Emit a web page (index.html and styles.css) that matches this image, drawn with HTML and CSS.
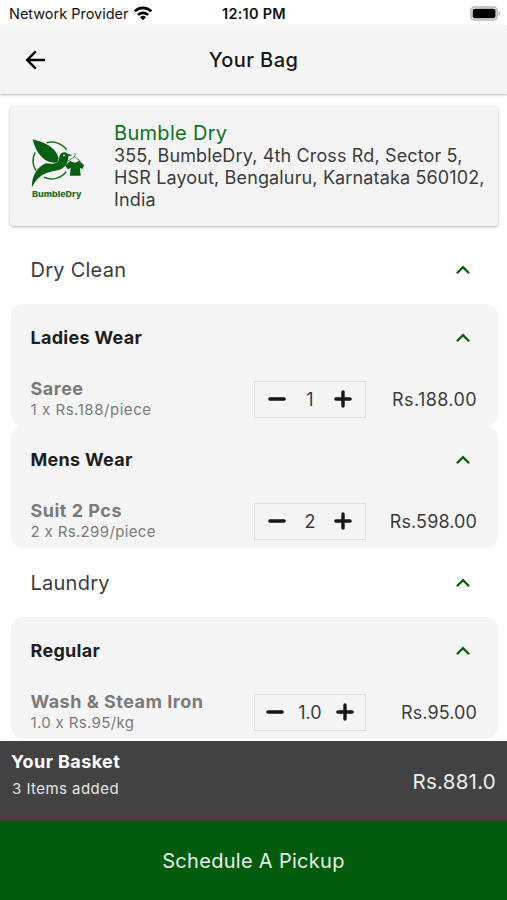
FILE: index.html
```html
<!DOCTYPE html>
<html lang="en">
<head>
<meta charset="utf-8">
<meta name="viewport" content="width=device-width, initial-scale=1">
<title>Your Bag</title>
<link rel="stylesheet" href="styles.css">
</head>
<body>
<svg class="defs" aria-hidden="true">
  <symbol id="chevron" viewBox="0 0 16 10"><path d="M1.9 8.2 8 2.1l6.1 6.1" fill="none" stroke="currentColor" stroke-width="2.3"/></symbol>
  <symbol id="minus" viewBox="0 0 18 18"><path d="M1.9 9h14.2" stroke="currentColor" stroke-width="3.4" stroke-linecap="round"/></symbol>
  <symbol id="plus" viewBox="0 0 18 18"><path d="M1.9 9h14.2M9 1.9v14.2" stroke="currentColor" stroke-width="3.4" stroke-linecap="round"/></symbol>
</svg>
<div class="app">
  <div class="status">
    <div class="carrier"><span>Network Provider</span>
      <svg class="wifi" viewBox="0 0 20 15"><g fill="none" stroke="#000" stroke-width="2.7"><path d="M1.7 5.4a11.7 11.7 0 0 1 16.6 0"/><path d="M4.9 8.9a7.2 7.2 0 0 1 10.2 0"/></g><path d="M7 11.3a4.3 4.3 0 0 1 6 0l-3 3z"/></svg>
    </div>
    <div class="clock">12:10 PM</div>
    <svg class="battery" viewBox="0 0 31 15"><rect x=".9" y=".9" width="26.2" height="13.2" rx="3.8" fill="#f4f4f4" stroke="#b5b5b5" stroke-width="1.5"/><rect x="2.7" y="2.7" width="22.8" height="9.6" rx="2" fill="#000"/><path d="M28.6 5c2.1.8 2.1 4.2 0 5z" fill="#b5b5b5"/></svg>
  </div>
  <header class="header">
    <svg class="back" viewBox="0 0 22 20"><path d="M20 10H2.5M10.8 1.4 2.2 10l8.6 8.6" fill="none" stroke="#000" stroke-width="2.4"/></svg>
    <h1>Your Bag</h1>
  </header>
  <main class="content">
    <section class="store">
      <svg class="logo" viewBox="0 0 75 75">
        <g fill="none" stroke="#1d7029" stroke-width="1.5">
          <path d="M26.5 12.7a18.5 18.5 0 0 1 20.3 7.3"/>
          <path d="M15.2 22.3a18.5 18.5 0 0 0 .8 18.3"/>
          <path d="M24 47.2a18.5 18.5 0 0 0 22.3-5.4"/>
        </g>
        <g fill="#075f12">
          <path d="M12.6 9.2C24 12 35.7 17.2 38.4 27.4c.5 3-.8 5.3-4.2 5.4C22 31.8 15.6 21 12.6 9.2z"/>
          <path d="M11.9 57.5c-.3-11.7 5-20.1 13.9-24.2 4.3.5 7.5 1 10.7-.6 3.1-1.6 2.2-5.3 3.7-8.2 1.8-3 6-3.1 7.5-.4l5.2.8-4.5 1.3c.2 6.7-3.7 12.3-10.4 14-9.8 1.8-18.8 2.9-26.1 17.3z"/>
          <path d="m50.5 30.5-5.2 5 2.3 3.8 3-1.3-.7 7.7h10.8l-.8-7.7 2.5 1.1 1.8-3.8-5.4-4.8c-2.3 2.8-5.9 2.8-8.3 0z"/>
        </g>
        <circle cx="44" cy="25.3" r=".9" fill="#f4f4f4"/>
        <path d="m48 31 6.5-4.2 6 4.2M54.5 27v-1.3c2-.6 1.3-2.4-.3-2" fill="none" stroke="#1d7029" stroke-width=".8"/>
        <text x="12" y="67.4" textLength="49.5" lengthAdjust="spacingAndGlyphs">BumbleDry</text>
      </svg>
      <div class="store-info">
        <h2>Bumble Dry</h2>
        <p>355, BumbleDry, 4th Cross Rd, Sector 5,<br>HSR Layout, Bengaluru, Karnataka 560102,<br>India</p>
      </div>
    </section>

    <div class="section-title"><h3>Dry Clean</h3><svg class="chevron"><use href="#chevron"/></svg></div>
    <section class="group">
      <div class="group-title"><h4>Ladies Wear</h4><svg class="chevron"><use href="#chevron"/></svg></div>
      <div class="item spaced">
        <div class="desc"><strong>Saree</strong><span>1 x Rs.188/piece</span></div>
        <div class="stepper"><svg><use href="#minus"/></svg><span>1</span><svg><use href="#plus"/></svg></div>
        <div class="price">Rs.188.00</div>
      </div>
    </section>
    <section class="group">
      <div class="group-title"><h4>Mens Wear</h4><svg class="chevron"><use href="#chevron"/></svg></div>
      <div class="item">
        <div class="desc"><strong>Suit 2 Pcs</strong><span>2 x Rs.299/piece</span></div>
        <div class="stepper"><svg><use href="#minus"/></svg><span>2</span><svg><use href="#plus"/></svg></div>
        <div class="price">Rs.598.00</div>
      </div>
    </section>

    <div class="section-title"><h3>Laundry</h3><svg class="chevron"><use href="#chevron"/></svg></div>
    <section class="group">
      <div class="group-title"><h4>Regular</h4><svg class="chevron"><use href="#chevron"/></svg></div>
      <div class="item">
        <div class="desc"><strong>Wash &amp; Steam Iron</strong><span>1.0 x Rs.95/kg</span></div>
        <div class="stepper"><svg><use href="#minus"/></svg><span>1.0</span><svg><use href="#plus"/></svg></div>
        <div class="price">Rs.95.00</div>
      </div>
    </section>
  </main>
  <div class="basket">
    <div class="summary"><strong>Your Basket</strong><span>3 Items added</span></div>
    <div class="total">Rs.881.0</div>
  </div>
  <button class="cta">Schedule A Pickup</button>
</div>
</body>
</html>
```
FILE: styles.css
```css
* { box-sizing: border-box; }
body { margin: 0; background: #fff; font-family: Inter, "Liberation Sans", sans-serif; color: #3b3b3b; }
h1, h2, h3, h4, p { margin: 0; }
svg { display: block; flex: none; }
.defs { position: absolute; width: 0; height: 0; }
.app { height: 900px; display: flex; flex-direction: column; overflow: hidden; }

.status { flex: none; height: 25px; display: grid; grid-template-columns: 1fr auto 1fr; align-items: center; padding: 2px 6px 0 9px; color: #111; }
.carrier { display: flex; align-items: center; gap: 5px; font-size: 14.5px; letter-spacing: -.02px; white-space: nowrap; }
.wifi { width: 20px; height: 15px; margin-top: -1px; }
.clock { font-size: 14.5px; font-weight: 600; letter-spacing: .25px; margin-left: -2px; }
.battery { width: 31px; height: 15px; justify-self: end; margin-top: -1px; }

.header { flex: none; height: 69px; display: grid; grid-template-columns: 1fr auto 1fr; align-items: center; padding: 0 25px; background: #f5f5f5; box-shadow: 0 1px 2px rgba(0, 0, 0, .3); }
.back { width: 22px; height: 20px; }
.header h1 { font-size: 20px; font-weight: 500; color: #161616; letter-spacing: .4px; }

.content { flex: 1; min-height: 0; overflow: hidden; padding: 12px 9px 0 11px; }
.store { height: 120px; margin: 0 0 9px -1px; display: flex; align-items: center; gap: 19px; padding-left: 10px; background: #f4f4f4; border-radius: 4px; box-shadow: 0 1px 3px rgba(0, 0, 0, .3); }
.logo { width: 75px; height: 75px; margin-top: 3px; }
.logo text { font-size: 8px; font-weight: 800; fill: #1d7029; }
.store-info { white-space: nowrap; }
.store h2 { font-size: 20px; line-height: 24px; font-weight: 400; color: #11701b; letter-spacing: .3px; }
.store p { font-size: 18px; line-height: 22px; letter-spacing: .14px; }

.section-title { height: 69px; display: flex; align-items: center; justify-content: space-between; padding: 0 27px 0 19.5px; }
.section-title h3 { font-size: 20px; font-weight: 400; letter-spacing: .25px; }
.chevron { width: 16px; height: 10px; color: #06600f; }
.group { height: 122px; background: #f5f5f5; border-radius: 12px; padding: 0 21px 0 19.5px; }
.group-title { height: 68px; display: flex; align-items: center; justify-content: space-between; padding-right: 6px; }
.group-title h4 { margin-top: -2px; font-size: 18px; font-weight: 700; color: #1d1d1d; letter-spacing: .3px; }
.item { height: 54px; display: grid; grid-template-columns: 223.5px 112px 1fr; align-items: center; }
.desc { display: flex; flex-direction: column; white-space: nowrap; color: #7a7a7a; margin-top: -2px; }
.desc strong { font-size: 18px; line-height: 22px; letter-spacing: .5px; }
.desc span { font-size: 15px; line-height: 19px; letter-spacing: .35px; }
.spaced .desc span { letter-spacing: .55px; }
.stepper { height: 37px; display: flex; align-items: center; justify-content: center; border: 1px solid #dfdfdf; }
.stepper svg { width: 18px; height: 18px; color: #161616; }
.stepper span { min-width: 47.5px; padding: 0 14px; font-size: 18px; text-align: center; }
.price { font-size: 18px; text-align: right; letter-spacing: .1px; }
.spaced .price { letter-spacing: .4px; }

.basket { flex: none; height: 80px; display: flex; justify-content: space-between; align-items: center; padding: 0 11px; background: #424242; color: #fff; }
.summary { align-self: flex-start; padding-top: 9px; display: flex; flex-direction: column; gap: 5px; }
.summary strong { font-size: 18px; line-height: 24px; letter-spacing: .4px; }
.summary span { padding-left: 1px; font-size: 15px; line-height: 20px; color: #e6e6e6; letter-spacing: .45px; }
.total { font-size: 20.5px; color: #eee; letter-spacing: .25px; }
.cta { flex: none; height: 79px; border: 0; border-radius: 0; padding: 0; background: #005b0c; color: #e9f3e9; font: 400 20px Inter, "Liberation Sans", sans-serif; letter-spacing: .3px; }
```
